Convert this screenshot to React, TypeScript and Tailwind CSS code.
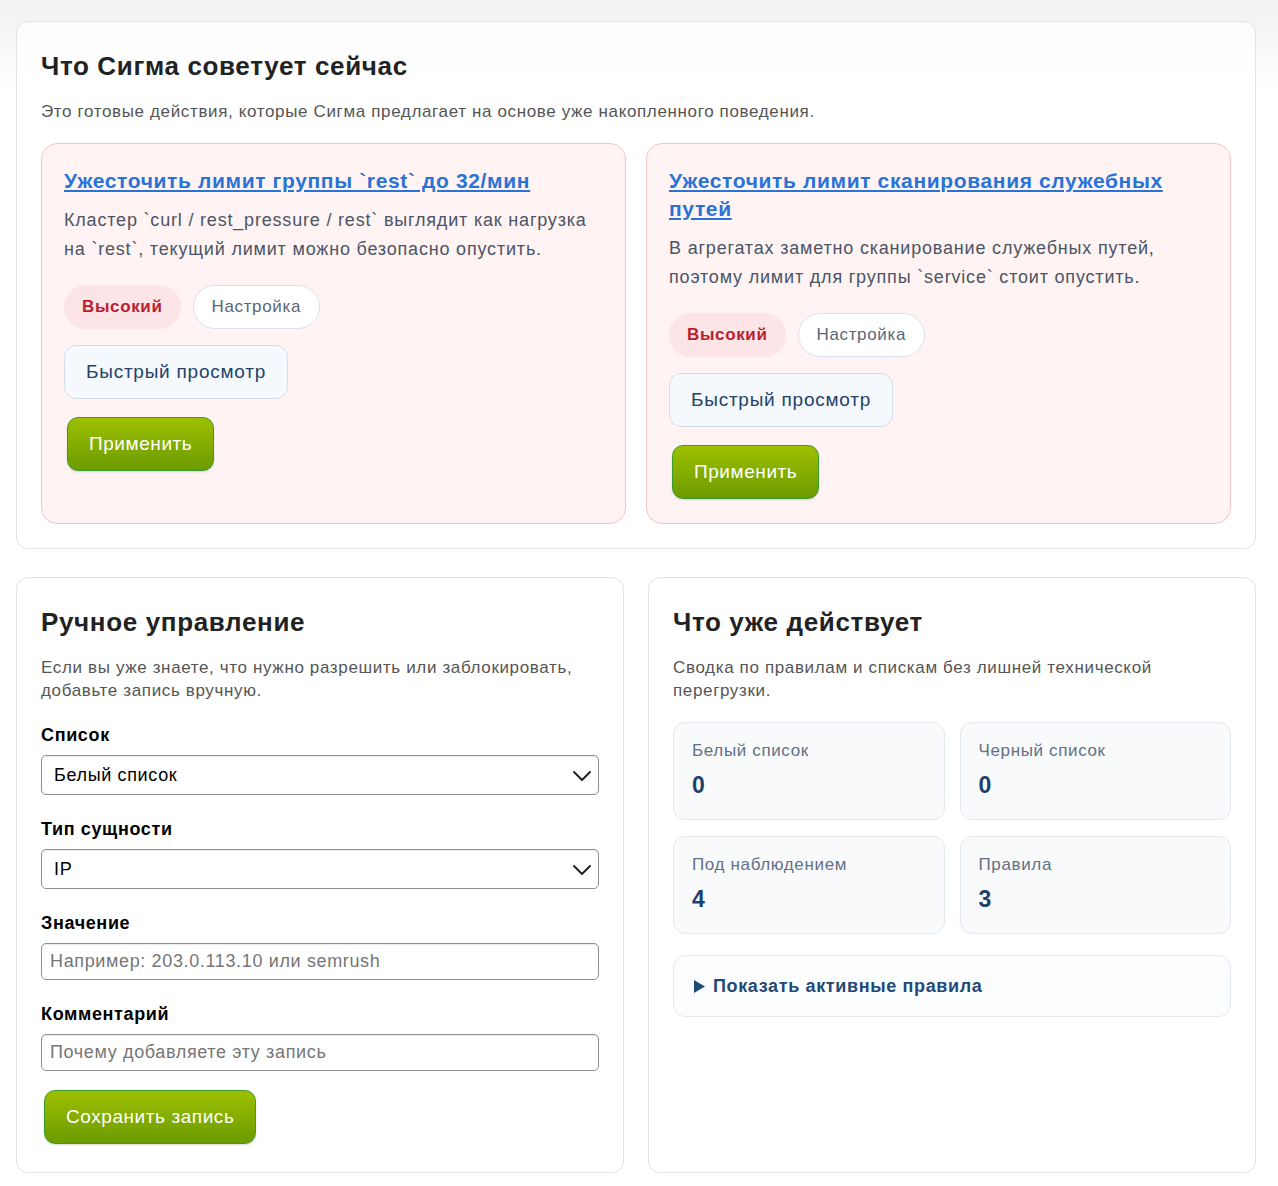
const font = { fontFamily: '"Liberation Sans", Arial, "Noto Sans", sans-serif' }

type Advice = {
  title: string
  text: string
}

const advices: Advice[] = [
  {
    title: 'Ужесточить лимит группы `rest` до 32/мин',
    text: 'Кластер `curl / rest_pressure / rest` выглядит как нагрузка на `rest`, текущий лимит можно безопасно опустить.',
  },
  {
    title: 'Ужесточить лимит сканирования служебных путей',
    text: 'В агрегатах заметно сканирование служебных путей, поэтому лимит для группы `service` стоит опустить.',
  },
]

const stats = [
  { label: 'Белый список', value: '0' },
  { label: 'Черный список', value: '0' },
  { label: 'Под наблюдением', value: '4' },
  { label: 'Правила', value: '3' },
]

function GreenButton({ children, className = '' }: { children: React.ReactNode; className?: string }) {
  return (
    <button
      type="button"
      className={`rounded-[11px] border border-[#3f9a2c] bg-[linear-gradient(180deg,#9dc000_0%,#6c9b00_100%)] text-[19px] tracking-[0.03em] text-white shadow-[0_1px_2px_rgba(0,0,0,0.15)] ${className}`}
    >
      {children}
    </button>
  )
}

function AdviceCard({ advice }: { advice: Advice }) {
  return (
    <div className="rounded-2xl border border-[#f0c5ca] bg-[#fff3f3] px-[22px] pt-[23px] pb-[24px]">
      <a href="#" className="block text-[21px] font-bold leading-[28px] text-[#2a73d6] underline underline-offset-2">
        {advice.title}
      </a>
      <p className="mt-[11px] text-[18px] leading-[29px] tracking-[0.045em] text-[#4b5565]">{advice.text}</p>
      <div className="mt-[21px] flex gap-3">
        <span className="flex h-[44px] items-center rounded-full bg-[#fde4e6] px-[18px] text-[17px] font-bold text-[#b8202f]">
          Высокий
        </span>
        <span className="flex h-[44px] items-center rounded-full border border-[#d8e2ee] bg-white px-[18px] text-[17px] text-[#5b6778]">
          Настройка
        </span>
      </div>
      <button
        type="button"
        className="mt-[16px] block h-[54px] rounded-xl border border-[#d2dde9] bg-[#f5f8fc] px-[21px] text-[19px] tracking-[0.04em] text-[#23436a]"
      >
        Быстрый просмотр
      </button>
      <GreenButton className="mt-[18px] ml-[3px] block h-[54px] px-[21px]">Применить</GreenButton>
    </div>
  )
}

function Field({ label, children }: { label: string; children: React.ReactNode }) {
  return (
    <div className="mt-[23px] first:mt-0">
      <div className="mb-[9px] text-[18px] font-bold leading-[22px] text-black">{label}</div>
      {children}
    </div>
  )
}

function SelectBox({ value }: { value: string }) {
  return (
    <div className="relative flex h-[40px] items-center rounded-[5px] border border-[#8f8f8f] bg-white pl-[12px] text-[18px] text-black shadow-[inset_0_1px_1px_rgba(0,0,0,0.08)]">
      {value}
      <svg className="absolute right-[7px] top-[15px]" width="18" height="10" viewBox="0 0 18 10" fill="none">
        <polyline points="1,1 9,9 17,1" stroke="#1a1a1a" strokeWidth="1.8" strokeLinecap="round" strokeLinejoin="round" />
      </svg>
    </div>
  )
}

function TextInput({ placeholder }: { placeholder: string }) {
  return (
    <input
      type="text"
      placeholder={placeholder}
      className="block h-[37px] w-full rounded-[5px] border border-[#8f8f8f] bg-white px-[8px] text-[18px] text-black shadow-[inset_0_1px_1px_rgba(0,0,0,0.08)] placeholder:text-[#767676]"
    />
  )
}

export default function App() {
  return (
    <div
      className="min-h-screen bg-[linear-gradient(180deg,#f1f1f1_0px,#ffffff_90px)] pl-4 pr-[22px] pt-[21px] pb-[14px] tracking-[0.04em]"
      style={font}
    >
      {/* рекомендации */}
      <section className="rounded-xl border border-[#e0e3e8] bg-white/80 px-6 pt-[28px] pb-6">
        <h2 className="text-[26px] font-bold leading-[32px] tracking-[0.025em] text-[#222]">Что Сигма советует сейчас</h2>
        <p className="mt-[19px] text-[17px] leading-[22px] text-[#555]">
          Это готовые действия, которые Сигма предлагает на основе уже накопленного поведения.
        </p>
        <div className="mt-[20px] grid grid-cols-2 gap-5">
          {advices.map((a) => (
            <AdviceCard key={a.title} advice={a} />
          ))}
        </div>
      </section>

      <div className="mt-[28px] grid grid-cols-2 gap-6">
        {/* ручное управление */}
        <section className="rounded-xl border border-[#e0e3e8] bg-white px-6 pt-[28px] pb-[28px]">
          <h2 className="text-[26px] font-bold leading-[32px] tracking-[0.025em] text-[#222]">Ручное управление</h2>
          <p className="mt-[18px] text-[17px] leading-[23px] text-[#555]">
            Если вы уже знаете, что нужно разрешить или заблокировать, добавьте запись вручную.
          </p>
          <div className="mt-[22px]">
            <Field label="Список">
              <SelectBox value="Белый список" />
            </Field>
            <Field label="Тип сущности">
              <SelectBox value="IP" />
            </Field>
            <Field label="Значение">
              <TextInput placeholder="Например: 203.0.113.10 или semrush" />
            </Field>
            <Field label="Комментарий">
              <TextInput placeholder="Почему добавляете эту запись" />
            </Field>
          </div>
          <GreenButton className="mt-[19px] ml-[3px] block h-[54px] px-[21px]">Сохранить запись</GreenButton>
        </section>

        {/* сводка */}
        <section className="rounded-xl border border-[#e0e3e8] bg-white px-6 pt-[28px] pb-6">
          <h2 className="text-[26px] font-bold leading-[32px] tracking-[0.025em] text-[#222]">Что уже действует</h2>
          <p className="mt-[18px] text-[17px] leading-[23px] text-[#555]">
            Сводка по правилам и спискам без лишней технической перегрузки.
          </p>
          <div className="mt-[20px] grid grid-cols-2 gap-x-[15px] gap-y-4">
            {stats.map((s) => (
              <div key={s.label} className="h-[98px] rounded-xl border border-[#e3e9f0] bg-[#f8fafc] px-[18px] pt-[17px]">
                <div className="text-[17px] leading-[22px] text-[#637085]">{s.label}</div>
                <div className="mt-[10px] text-[23px] font-bold leading-[26px] text-[#1e416b]">{s.value}</div>
              </div>
            ))}
          </div>
          <details className="mt-[21px] rounded-xl border border-[#e3e9f0] bg-[#fcfdfe]">
            <summary className="flex h-[60px] cursor-pointer list-none items-center px-[20px] text-[18px] font-bold text-[#1e4a78]">
              <svg className="mr-[8px]" width="11" height="13" viewBox="0 0 11 13">
                <polygon points="0,0 11,6.5 0,13" fill="#1e4a78" />
              </svg>
              Показать активные правила
            </summary>
          </details>
        </section>
      </div>
    </div>
  )
}
